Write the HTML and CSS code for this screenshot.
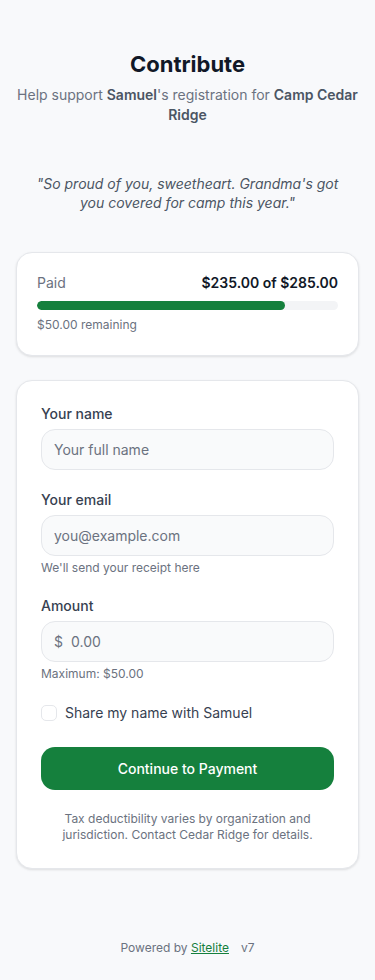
FILE: index.html
```html
<!DOCTYPE html>
<html lang="en">
<head>
<meta charset="utf-8">
<meta name="viewport" content="width=device-width, initial-scale=1">
<title>Contribute</title>
<link rel="stylesheet" href="styles.css">
</head>
<body>
<main class="page">
  <header class="hero">
    <h1 class="title">Contribute</h1>
    <p class="subtitle">Help support <strong>Samuel</strong>'s registration for <strong>Camp Cedar Ridge</strong></p>
  </header>

  <p class="quote">"So proud of you, sweetheart. Grandma's got you covered for camp this year."</p>

  <section class="card progress-card">
    <div class="progress-head">
      <span class="paid-label">Paid</span>
      <span class="paid-amount">$235.00 of $285.00</span>
    </div>
    <div class="bar"><div class="bar-fill" style="width: 82.5%"></div></div>
    <div class="remaining">$50.00 remaining</div>
  </section>

  <form class="card form-card" onsubmit="return false">
    <div class="field">
      <label class="label" for="name">Your name</label>
      <input class="input" id="name" type="text" placeholder="Your full name">
    </div>
    <div class="field">
      <label class="label" for="email">Your email</label>
      <input class="input" id="email" type="email" placeholder="you@example.com">
      <div class="hint">We'll send your receipt here</div>
    </div>
    <div class="field">
      <label class="label" for="amount">Amount</label>
      <div class="input amount-box">
        <span class="currency">$</span>
        <input class="amount-input" id="amount" type="text" placeholder="0.00">
      </div>
      <div class="hint">Maximum: $50.00</div>
    </div>
    <label class="check-row">
      <span class="checkbox"></span>
      <span>Share my name with Samuel</span>
    </label>
    <button class="btn" type="submit">Continue to Payment</button>
    <p class="fine">Tax deductibility varies by organization and jurisdiction. Contact Cedar Ridge for details.</p>
  </form>

  <footer class="footer">Powered by <a href="#" class="brand">Sitelite</a><span class="ver">v7</span></footer>
</main>
</body>
</html>
```

FILE: styles.css
```css
* { box-sizing: border-box; }
html, body { margin: 0; padding: 0; }
body {
  background: #f8f9fb;
  font-family: Inter, "Noto Sans", "Liberation Sans", sans-serif;
  color: #111827;
  -webkit-font-smoothing: antialiased;
}
.page {
  width: 375px;
  padding: 48px 16px 20px;
  display: flex;
  flex-direction: column;
}
.hero { text-align: center; }
.title {
  margin: 0;
  font-size: 22px;
  line-height: 32px;
  font-weight: 700;
  color: #111827;
}
.subtitle {
  margin: 5px 0 0;
  font-size: 14px;
  line-height: 20px;
  color: #6b7280;
}
.subtitle strong { color: #4b5563; font-weight: 600; }
.quote {
  margin: 49px 0 0;
  padding: 0 20px;
  text-align: center;
  font-style: italic;
  font-size: 14px;
  line-height: 19px;
  color: #4b5563;
}
.card {
  background: #fff;
  border: 1px solid #e5e7eb;
  border-radius: 16px;
  box-shadow: 0 1px 3px rgba(0,0,0,0.08), 0 1px 2px rgba(0,0,0,0.04);
}
.progress-card {
  margin-top: 40px;
  padding: 20px 20px 22px;
}
.progress-head {
  display: flex;
  justify-content: space-between;
  align-items: baseline;
  font-size: 14px;
  line-height: 20px;
}
.paid-label { color: #6b7280; }
.paid-amount { font-weight: 600; color: #111827; }
.bar {
  margin-top: 8px;
  height: 9px;
  border-radius: 999px;
  background: #f3f4f6;
  overflow: hidden;
}
.bar-fill { height: 100%; background: #15803d; border-radius: 999px; }
.remaining {
  margin-top: 7px;
  font-size: 12px;
  line-height: 16px;
  color: #6b7280;
}
.form-card {
  margin-top: 24px;
  padding: 23px 24px 25px;
  display: flex;
  flex-direction: column;
}
.field { display: flex; flex-direction: column; margin-bottom: 20px; }
.label {
  font-size: 14px;
  line-height: 20px;
  font-weight: 500;
  color: #374151;
  margin-bottom: 5px;
}
.input {
  height: 41px;
  width: 100%;
  border: 1px solid #e5e7eb;
  border-radius: 14px;
  background: #f9fafb;
  padding: 0 12px;
  font: inherit;
  font-size: 14px;
  color: #111827;
  outline: none;
}
.input::placeholder, .amount-input::placeholder { color: #6b7280; opacity: 1; }
.amount-box { display: flex; align-items: center; gap: 8px; }
.currency { font-size: 14px; color: #6b7280; }
.amount-input {
  flex: 1;
  border: 0;
  background: transparent;
  font: inherit;
  font-size: 14px;
  outline: none;
  padding: 0;
  color: #111827;
}
.hint {
  margin-top: 4px;
  font-size: 12px;
  line-height: 16px;
  color: #6b7280;
}
.check-row {
  display: flex;
  align-items: center;
  gap: 8px;
  font-size: 14px;
  line-height: 20px;
  color: #374151;
  margin-top: 1px;
}
.checkbox {
  width: 16px;
  height: 16px;
  border: 1px solid #e5e7eb;
  border-radius: 5px;
  background: #fff;
  flex: none;
}
.btn {
  margin-top: 24px;
  height: 43px;
  border: 0;
  border-radius: 14px;
  background: #15803d;
  color: #fff;
  font: inherit;
  font-size: 14px;
  font-weight: 500;
}
.fine {
  margin: 21px 0 0;
  padding: 0 12px;
  text-align: center;
  font-size: 12px;
  line-height: 16px;
  color: #6b7280;
}
.footer {
  margin-top: 71px;
  text-align: center;
  font-size: 12px;
  line-height: 16px;
  color: #6b7280;
}
.brand { color: #15803d; text-decoration: underline; }
.ver { margin-left: 12px; }
```
